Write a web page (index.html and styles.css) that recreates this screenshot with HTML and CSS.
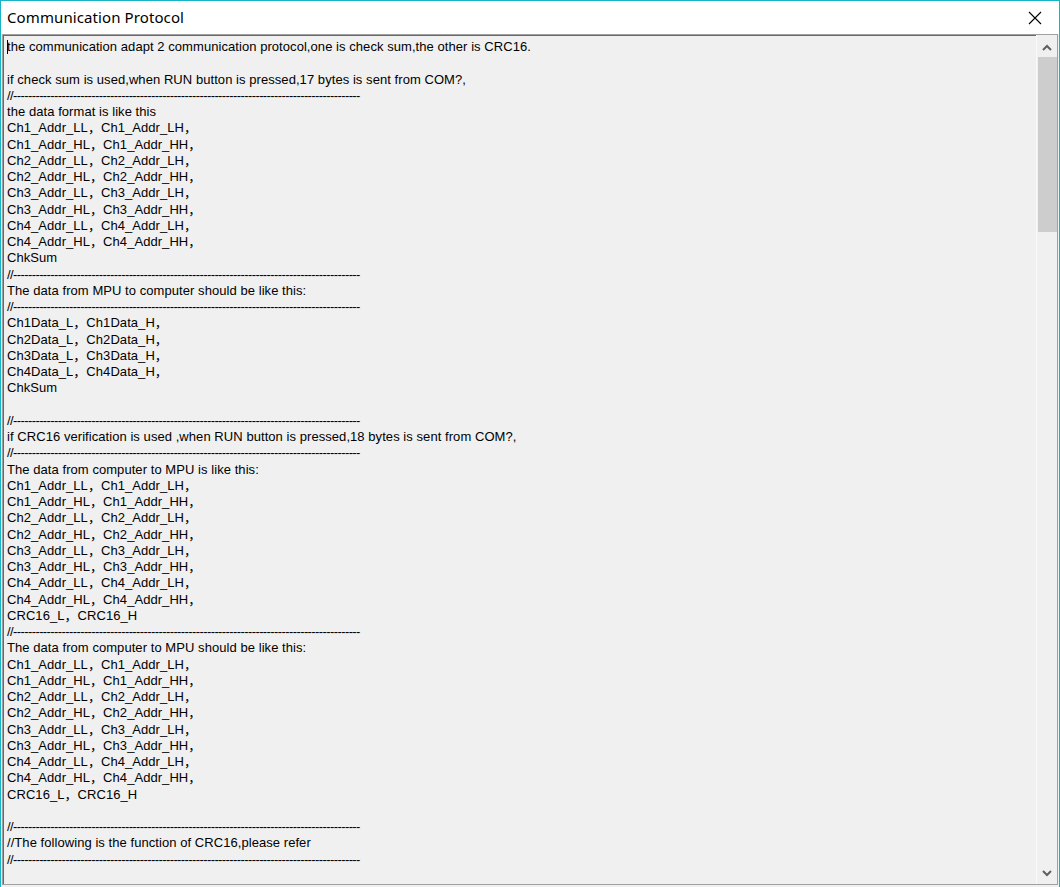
FILE: index.html
```html
<!DOCTYPE html>
<html>
<head>
<meta charset="utf-8">
<title>Communication Protocol</title>
<link rel="stylesheet" href="styles.css">
</head>
<body>
<div class="window">
  <div class="titlebar">
    <div class="title">Communication Protocol</div>
    <div class="close">
      <svg width="14" height="14" viewBox="0 0 14 14"><path d="M1 1 L13 13 M13 1 L1 13" stroke="#000" stroke-width="1.1" fill="none"/></svg>
    </div>
  </div>
  <div class="edit">
    <div class="text">
      <div class="line"><span class="caret"></span>the communication adapt 2 communication protocol,one is check sum,the other is CRC16.</div>
      <div class="line"> </div>
      <div class="line">if check sum is used,when RUN button is pressed,17 bytes is sent from COM?,</div>
      <div class="line rule">//---------------------------------------------------------------------------------------------</div>
      <div class="line">the data format is like this</div>
      <div class="line">Ch1_Addr_LL，Ch1_Addr_LH，</div>
      <div class="line">Ch1_Addr_HL，Ch1_Addr_HH，</div>
      <div class="line">Ch2_Addr_LL，Ch2_Addr_LH，</div>
      <div class="line">Ch2_Addr_HL，Ch2_Addr_HH，</div>
      <div class="line">Ch3_Addr_LL，Ch3_Addr_LH，</div>
      <div class="line">Ch3_Addr_HL，Ch3_Addr_HH，</div>
      <div class="line">Ch4_Addr_LL，Ch4_Addr_LH，</div>
      <div class="line">Ch4_Addr_HL，Ch4_Addr_HH，</div>
      <div class="line">ChkSum</div>
      <div class="line rule">//---------------------------------------------------------------------------------------------</div>
      <div class="line">The data from MPU to computer should be like this:</div>
      <div class="line rule">//---------------------------------------------------------------------------------------------</div>
      <div class="line">Ch1Data_L，Ch1Data_H，</div>
      <div class="line">Ch2Data_L，Ch2Data_H，</div>
      <div class="line">Ch3Data_L，Ch3Data_H，</div>
      <div class="line">Ch4Data_L，Ch4Data_H，</div>
      <div class="line">ChkSum</div>
      <div class="line"> </div>
      <div class="line rule">//---------------------------------------------------------------------------------------------</div>
      <div class="line">if CRC16 verification is used ,when RUN button is pressed,18 bytes is sent from COM?,</div>
      <div class="line rule">//---------------------------------------------------------------------------------------------</div>
      <div class="line">The data from computer to MPU is like this:</div>
      <div class="line">Ch1_Addr_LL，Ch1_Addr_LH，</div>
      <div class="line">Ch1_Addr_HL，Ch1_Addr_HH，</div>
      <div class="line">Ch2_Addr_LL，Ch2_Addr_LH，</div>
      <div class="line">Ch2_Addr_HL，Ch2_Addr_HH，</div>
      <div class="line">Ch3_Addr_LL，Ch3_Addr_LH，</div>
      <div class="line">Ch3_Addr_HL，Ch3_Addr_HH，</div>
      <div class="line">Ch4_Addr_LL，Ch4_Addr_LH，</div>
      <div class="line">Ch4_Addr_HL，Ch4_Addr_HH，</div>
      <div class="line">CRC16_L，CRC16_H</div>
      <div class="line rule">//---------------------------------------------------------------------------------------------</div>
      <div class="line">The data from computer to MPU should be like this:</div>
      <div class="line">Ch1_Addr_LL，Ch1_Addr_LH，</div>
      <div class="line">Ch1_Addr_HL，Ch1_Addr_HH，</div>
      <div class="line">Ch2_Addr_LL，Ch2_Addr_LH，</div>
      <div class="line">Ch2_Addr_HL，Ch2_Addr_HH，</div>
      <div class="line">Ch3_Addr_LL，Ch3_Addr_LH，</div>
      <div class="line">Ch3_Addr_HL，Ch3_Addr_HH，</div>
      <div class="line">Ch4_Addr_LL，Ch4_Addr_LH，</div>
      <div class="line">Ch4_Addr_HL，Ch4_Addr_HH，</div>
      <div class="line">CRC16_L，CRC16_H</div>
      <div class="line"> </div>
      <div class="line rule">//---------------------------------------------------------------------------------------------</div>
      <div class="line">//The following is the function of CRC16,please refer</div>
      <div class="line rule">//---------------------------------------------------------------------------------------------</div>
    </div>
    <div class="scrollbar">
      <div class="sb-btn sb-up">
        <svg width="10" height="7" viewBox="0 0 10 7"><path d="M1 6 L5 2 L9 6" stroke="#606060" stroke-width="2" fill="none"/></svg>
      </div>
      <div class="sb-track">
        <div class="sb-thumb"></div>
      </div>
      <div class="sb-btn sb-down">
        <svg width="10" height="7" viewBox="0 0 10 7"><path d="M1 1 L5 5 L9 1" stroke="#606060" stroke-width="2" fill="none"/></svg>
      </div>
    </div>
  </div>
</div>
</body>
</html>
```

FILE: styles.css
```css
html, body {
  margin: 0;
  padding: 0;
  background: #f0f0f0;
}
.window {
  width: 1060px;
  height: 887px;
  box-sizing: border-box;
  border: 1px solid #18b4c6;
  border-bottom: none;
  display: flex;
  flex-direction: column;
  background: #f0f0f0;
  overflow: hidden;
}
.titlebar {
  height: 33px;
  flex: none;
  background: #ffffff;
  display: flex;
  align-items: center;
  justify-content: space-between;
  padding-left: 6px;
}
.title {
  font-family: "Noto Sans", "Open Sans", sans-serif;
  font-size: 15px;
  color: #000;
  letter-spacing: 0.1px;
  margin-top: -2px;
}
.close {
  width: 46px;
  height: 33px;
  display: flex;
  align-items: center;
  justify-content: center;
  margin-right: 1px;
}
.edit {
  flex: 1;
  display: flex;
  margin: 0 1px 2px 1px;
  border: 1px solid #a0a0a0;
  box-shadow: inset 1px 1px 0 #696969;
  min-height: 0;
}
.text {
  flex: 1;
  padding: 4px 0 0 4px;
  font-family: "Liberation Sans", Arial, "Noto Sans CJK SC", sans-serif;
  font-size: 13px;
  line-height: 16.25px;
  letter-spacing: 0.06px;
  color: #000;
  overflow: hidden;
}
.line {
  height: 16.25px;
  white-space: pre;
}
.caret {
  display: inline-block;
  width: 1px;
  height: 14px;
  background: #000;
  vertical-align: -3px;
  margin-right: -1px;
}
.rule {
  letter-spacing: -0.6px;
}
.scrollbar {
  width: 20px;
  flex: none;
  display: flex;
  flex-direction: column;
  border-left: 1px solid #fafafa;
  background: #f0f0f0;
}
.sb-btn {
  height: 21px;
  flex: none;
  display: flex;
  justify-content: center;
}
.sb-up {
  align-items: flex-end;
  padding-bottom: 5px;
  box-sizing: border-box;
}
.sb-down {
  align-items: center;
}
.sb-track {
  flex: 1;
  padding-top: 1px;
}
.sb-thumb {
  height: 175px;
  margin-left: 1px;
  background: #cdcdcd;
}
```
